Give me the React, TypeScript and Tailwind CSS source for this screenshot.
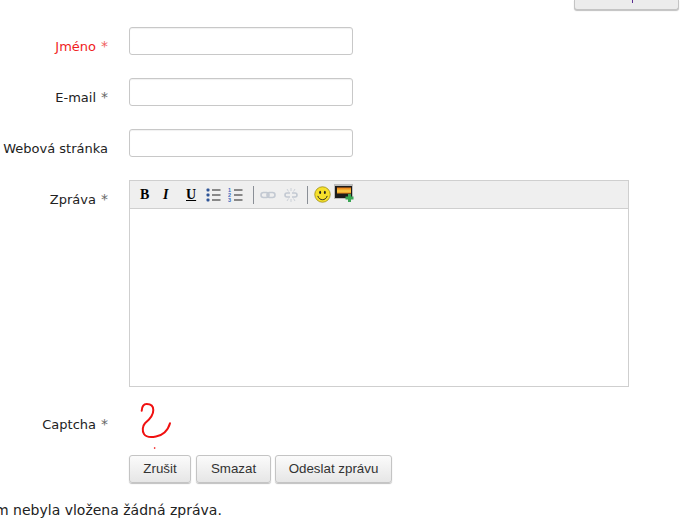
import { Fragment } from 'react'

const inputClass =
  'h-[28px] w-[224px] rounded-[3px] border border-[#c8c8c8] bg-white shadow-[inset_0_1px_1px_rgba(0,0,0,0.06)]'

const buttonClass =
  "h-[28px] rounded-[3px] border border-[#c4c4c4] bg-gradient-to-b from-[#fbfbfb] to-[#e6e6e6] font-['Liberation_Sans',sans-serif] text-[13.33px] text-[#333] shadow-[0_1px_1px_rgba(0,0,0,0.25)]"

function FieldLabel({ text, required, error }: { text: string; required?: boolean; error?: boolean }) {
  return (
    <label className={`block w-[108px] whitespace-nowrap text-right text-[13px] leading-[16px] ${error ? 'text-[#f01c1c]' : 'text-[#222]'}`}>
      {text}
      {required && <span className={`ml-[5px] text-[14px] leading-none ${error ? 'text-[#f06060]' : 'text-[#666]'}`}>*</span>}
    </label>
  )
}

function ListIcon({ numbered }: { numbered?: boolean }) {
  return (
    <svg width="15" height="14" viewBox="0 0 15 14" className="block">
      {[2, 7, 12].map((y, i) => (
        <Fragment key={y}>
          {numbered ? (
            <text x="0" y={y + 2} fontSize="5.5" fontWeight="700" fill="#3d6cc0" fontFamily="Liberation Sans">
              {i + 1}
            </text>
          ) : (
            <rect x="0.5" y={y - 1.5} width="3" height="3" rx="1" fill="#2f5597" />
          )}
          <rect x="6" y={y - 0.5} width="8.5" height="1" fill="#222" />
        </Fragment>
      ))}
    </svg>
  )
}

function LinkIcon({ broken }: { broken?: boolean }) {
  return (
    <svg width="16" height="16" viewBox="0 0 16 16" fill="none" stroke="#c3c9d2" strokeWidth="1.6" className="block">
      {broken ? (
        <>
          <path d="M7 6H4a2 2 0 0 0 0 4h3M9 6h3a2 2 0 0 1 0 4H9" />
          <path d="M8 1v3M8 12v3M4 2l1.5 2.5M12 2l-1.5 2.5M4 14l1.5-2.5M12 14l-1.5-2.5" strokeWidth="0.8" />
        </>
      ) : (
        <>
          <rect x="1" y="5.5" width="8" height="5" rx="2.5" />
          <rect x="7" y="5.5" width="8" height="5" rx="2.5" />
        </>
      )}
    </svg>
  )
}

function SmileyIcon() {
  return (
    <svg width="17" height="17" viewBox="0 0 18 18" className="block">
      <circle cx="9" cy="9" r="8.2" fill="#f6e02c" stroke="#9a8a10" strokeWidth="0.8" />
      <ellipse cx="6.5" cy="6.8" rx="1" ry="1.8" fill="#222" />
      <ellipse cx="11.5" cy="6.8" rx="1" ry="1.8" fill="#222" />
      <path d="M4 10.5c1 3 3 4 5 4s4-1 5-4" fill="none" stroke="#222" strokeWidth="1" />
    </svg>
  )
}

function ImageIcon() {
  return (
    <svg width="20" height="19" viewBox="0 0 20 19" className="block">
      <defs>
        <linearGradient id="sunset" x1="0" y1="0" x2="0" y2="1">
          <stop offset="0" stopColor="#e8740f" />
          <stop offset="0.6" stopColor="#fbd24a" />
          <stop offset="1" stopColor="#e88a1a" />
        </linearGradient>
      </defs>
      <rect x="0" y="0" width="19" height="15" fill="#bdbdbd" />
      <rect x="1" y="2" width="17" height="12" fill="#1c1c1c" />
      <rect x="3" y="3.5" width="14" height="6" fill="url(#sunset)" />
      <path d="M14 10h3v2.5h2.5v3H17V18h-3v-2.5h-2.5v-3H14z" fill="#3aa655" />
    </svg>
  )
}

function Toolbar() {
  return (
    <div className="flex h-[28px] items-center border-b border-[#cfcfcf] bg-[#efefef] pl-[10px] font-['Liberation_Serif',serif]">
      <span className="w-[23px] text-[14px] font-bold text-black">B</span>
      <span className="w-[23px] text-[14px] font-bold italic text-black">I</span>
      <span className="w-[20px] text-[14px] font-bold text-black underline">U</span>
      <div className="w-[22px]">
        <ListIcon />
      </div>
      <div className="w-[16px]">
        <ListIcon numbered />
      </div>
      <div className="mr-[6px] ml-[9px] h-[18px] w-px bg-[#8a8f96]" />
      <div className="w-[23px]">
        <LinkIcon />
      </div>
      <LinkIcon broken />
      <div className="mr-[6px] ml-[8px] h-[18px] w-px bg-[#8a8f96]" />
      <SmileyIcon />
      <div className="mb-[3px] ml-[3px]">
        <ImageIcon />
      </div>
    </div>
  )
}

function Captcha() {
  return (
    <svg width="45" height="50" viewBox="0 0 45 50" fill="none" stroke="#f01010" strokeWidth="2" strokeLinecap="round" className="block">
      <path d="M12.7 11.7C13 7 15 5 17.7 5C21 5 24.3 6 24.3 11C24.5 16 20 21 16 24.3C13.5 27 13 32 15 35C17 38 22 38.5 27 37.5C33 36.5 39 32 41 24.3" />
      <circle cx="25.5" cy="49" r="0.5" fill="#f01010" strokeWidth="0.5" />
    </svg>
  )
}

export default function App() {
  return (
    <div className="h-[527px] w-[685px] overflow-hidden bg-white font-['DejaVu_Sans',sans-serif]">
      <div className="flex h-[10px] items-end justify-end pr-[6px]">
        <div className="flex h-[10px] w-[105px] justify-center rounded-b-[3px] border border-t-0 border-[#c4c4c4] bg-[#ececec] shadow-[0_1px_1px_rgba(0,0,0,0.25)]">
          <div className="ml-[12px] h-[3px] w-px bg-[#5a2d91]" />
        </div>
      </div>

      <div className="flex flex-col gap-[23px] pt-[17px]">
        <div className="flex items-start gap-[21px]">
          <div className="pt-[12px]">
            <FieldLabel text="Jméno" required error />
          </div>
          <div className={inputClass} />
        </div>
        <div className="flex items-start gap-[21px]">
          <div className="pt-[12px]">
            <FieldLabel text="E-mail" required />
          </div>
          <div className={inputClass} />
        </div>
        <div className="flex items-start gap-[21px]">
          <div className="pt-[12px]">
            <FieldLabel text="Webová stránka" />
          </div>
          <div className={inputClass} />
        </div>
        <div className="flex items-start gap-[21px]">
          <div className="pt-[12px]">
            <FieldLabel text="Zpráva" required />
          </div>
          <div className="h-[207px] w-[500px] border border-[#cfcfcf] bg-white">
            <Toolbar />
          </div>
        </div>
      </div>

      <div className="mt-[12px] flex items-start gap-[21px]">
        <div className="pt-[18px]">
          <FieldLabel text="Captcha" required />
        </div>
        <Captcha />
      </div>

      <div className="mt-[6px] flex pl-[129px]">
        <button className={`${buttonClass} w-[62px]`}>Zrušit</button>
        <button className={`${buttonClass} ml-[5px] w-[75px]`}>Smazat</button>
        <button className={`${buttonClass} ml-[4px] w-[117px] text-[#222]`}>Odeslat zprávu</button>
      </div>

      <p className="mt-[17px] ml-[-5px] whitespace-nowrap text-[14px] text-[#222]">m nebyla vložena žádná zpráva.</p>
    </div>
  )
}
